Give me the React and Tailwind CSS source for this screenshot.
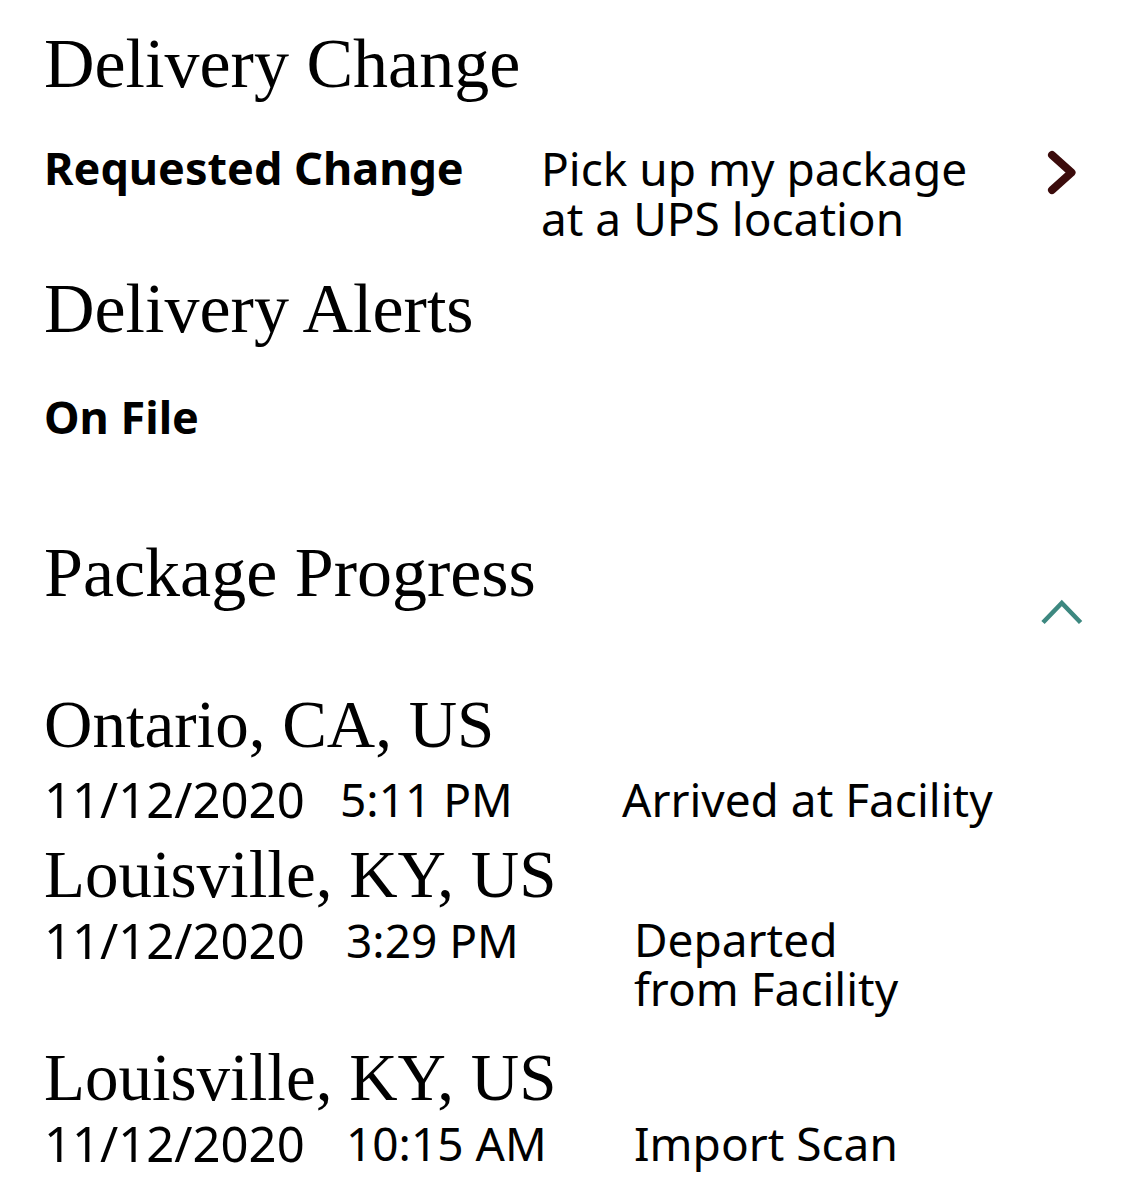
import { useState } from "react";

const serif = "font-['Liberation_Serif',serif]";
const sans = "font-['Noto_Sans',sans-serif]";

const events = [
  {
    place: "Ontario, CA, US",
    date: "11/12/2020",
    time: "5:11 PM",
    status: "Arrived at Facility",
    placeClass: "mt-[63px]",
    rowClass: "mt-[15px]",
    timeClass: "w-[282px]",
    statusClass: "pl-0",
  },
  {
    place: "Louisville, KY, US",
    date: "11/12/2020",
    time: "3:29 PM",
    status: "Departed from Facility",
    placeClass: "mt-[15px]",
    rowClass: "mt-[6px]",
    timeClass: "w-[294px] pl-[6px]",
    statusClass: "w-[292px] leading-[49px]",
  },
  {
    place: "Louisville, KY, US",
    date: "11/12/2020",
    time: "10:15 AM",
    status: "Import Scan",
    placeClass: "mt-[29px]",
    rowClass: "mt-[6px]",
    timeClass: "w-[294px] pl-[6px]",
    statusClass: "pl-0",
  },
];

function ChevronRight() {
  return (
    <svg width="40" height="45" viewBox="0 0 40 45" className="mt-[7px] ml-auto shrink-0">
      <path
        d="M11 5 L30.5 22.5 L11 40"
        fill="none"
        stroke="#3b0b0b"
        strokeWidth="8"
        strokeLinecap="round"
        strokeLinejoin="round"
      />
    </svg>
  );
}

function ChevronUp() {
  return (
    <svg width="44" height="28" viewBox="0 0 44 28">
      <path
        d="M3 24.5 L21.8 5 L40.6 24.5"
        fill="none"
        stroke="#3d8880"
        strokeWidth="4.6"
      />
    </svg>
  );
}

function Heading({ children, className = "" }) {
  return (
    <h2 className={`${serif} text-[70px] leading-[70px] text-black ${className}`}>
      {children}
    </h2>
  );
}

export default function App() {
  const [open, setOpen] = useState(true);

  return (
    <div className="min-h-screen bg-white px-[44px] pt-[29px] pb-10 text-black">
      {/* Delivery change */}
      <Heading>Delivery Change</Heading>
      <div className={`${sans} mt-[44px] flex items-start text-[46px] leading-[50px]`}>
        <div className="w-[497px] shrink-0 text-[45px] font-bold">Requested Change</div>
        <div className="w-[450px]">Pick up my package at a UPS location</div>
        <ChevronRight />
      </div>

      {/* Alerts */}
      <Heading className="mt-[31px]">Delivery Alerts</Heading>
      <div className={`${sans} mt-[48px] text-[45px] leading-[50px] font-bold`}>On File</div>

      {/* Progress */}
      <Heading className="mt-[96px]">Package Progress</Heading>
      <div className="-mt-[10px] flex justify-end">
        <button onClick={() => setOpen(!open)} className="-mr-[3px]">
          <ChevronUp />
        </button>
      </div>

      {open &&
        events.map((e, i) => (
          <div key={i}>
            <div className={`${serif} text-[67px] leading-[70px] ${e.placeClass}`}>{e.place}</div>
            <div className={`${sans} ${e.rowClass} flex items-start text-[46px] leading-[50px]`}>
              <span className="w-[296px] shrink-0 text-[49px]">{e.date}</span>
              <span className={`${e.timeClass} shrink-0`}>{e.time}</span>
              <span className={e.statusClass}>{e.status}</span>
            </div>
          </div>
        ))}
    </div>
  );
}
